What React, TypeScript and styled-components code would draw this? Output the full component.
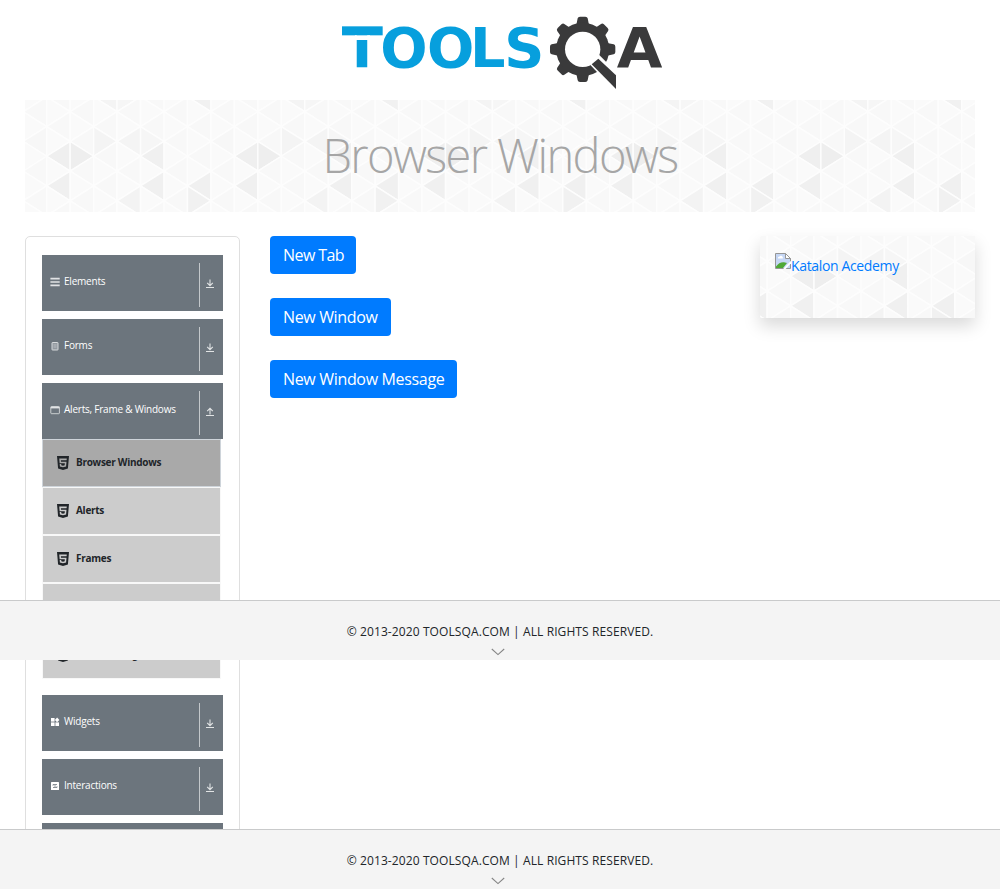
import React from "react";
import styled, { createGlobalStyle } from "styled-components";
import { IoLogoHtml5 } from "react-icons/io5";

const GlobalStyle = createGlobalStyle`
  *, *::before, *::after { box-sizing: border-box; }
  body {
    margin: 0;
    background: #fff;
    color: #212529;
    font-family: "Open Sans", "Noto Sans", sans-serif;
    font-size: 16px;
    line-height: 1.5;
  }
`;

const Page = styled.div`
  position: relative;
  height: 889px;
  overflow: hidden;
  padding: 0 25px;
`;

const Header = styled.header`
  height: 100px;
  display: flex;
  justify-content: center;
  padding: 10px 0 0 5px;
`;

const Banner = styled.div`
  height: 112px;
  display: grid;
  overflow: hidden;
  > * { grid-area: 1 / 1; }
`;

const Title = styled.h1`
  margin: 0;
  padding-bottom: 1px;
  z-index: 1;
  place-self: center;
  font-weight: 300;
  font-size: 47px;
  line-height: 1;
  letter-spacing: -1.6px;
  color: #a6a6a6;
  white-space: nowrap;
`;

const Columns = styled.div`
  display: flex;
  align-items: flex-start;
  margin-top: 24px;
`;

const Sidebar = styled.nav`
  flex: none;
  width: 215px;
  height: 700px;
  border: 1px solid #dfdfdf;
  border-radius: 5px;
  padding: 18px 16px;
  display: flex;
  flex-direction: column;
  gap: 8px;
`;

const GroupHeader = styled.div`
  height: 56px;
  background: #6c757d;
  color: #fff;
  padding: 0 8px;
  display: flex;
  align-items: center;
  justify-content: space-between;
`;

const GroupLabel = styled.span`
  display: flex;
  align-items: center;
  gap: 4px;
  margin-bottom: 4px;
  font-size: 10px;
  line-height: 14px;
  letter-spacing: -0.22px;
  white-space: nowrap;
  font-weight: 500;
  svg { position: relative; top: 1px; }
`;

const Toggle = styled.span`
  height: 44px;
  margin-top: 4px;
  border-left: 1px solid #c4c8cb;
  padding: 0 0 2px 5px;
  display: flex;
  align-items: center;
`;

const ItemList = styled.ul`
  list-style: none;
  margin: 0 2px 8px 0;
  padding: 0;
`;

const Item = styled.li<{ $active?: boolean }>`
  height: 48px;
  border: 1px solid ${(p) => (p.$active ? "#ced4da" : "#f8f8f8")};
  background: ${(p) => (p.$active ? "#a9a9a9" : "#ccc")};
  padding: 0 12px 2px;
  display: flex;
  align-items: center;
  gap: 5px;
  font-size: 10px;
  font-weight: 700;
  letter-spacing: -0.28px;
  svg { margin-top: 2px; }
`;

const Content = styled.main`
  flex: 1;
  padding-left: 30px;
  display: flex;
  flex-direction: column;
  align-items: flex-start;
  gap: 24px;
`;

const Button = styled.button<{ $width: number; $spacing: number }>`
  width: ${(p) => p.$width}px;
  height: 38px;
  padding: 0 0 0 13px;
  text-align: left;
  border: 0;
  border-radius: 4px;
  background: #007bff;
  color: #fff;
  font: 400 16px/24px "Open Sans", sans-serif;
  letter-spacing: ${(p) => p.$spacing}px;
  white-space: nowrap;
`;

const Ad = styled.aside`
  flex: none;
  width: 215px;
  height: 82px;
  display: grid;
  box-shadow: 0 8px 16px rgba(0, 0, 0, 0.15);
  > * { grid-area: 1 / 1; }
`;

const AdLink = styled.a`
  z-index: 1;
  display: flex;
  align-items: flex-start;
  padding: 17px 0 0 15px;
  color: #007bff;
  font-size: 14px;
  line-height: 26px;
  letter-spacing: -0.35px;
  white-space: nowrap;
`;

const Footer = styled.footer<{ $top: number }>`
  position: absolute;
  left: 0;
  right: 0;
  top: ${(p) => p.$top}px;
  height: 60px;
  border-top: 1px solid #c9cacb;
  background: #f4f4f4;
  display: flex;
  flex-direction: column;
  align-items: center;
  padding-top: 21px;
  font-size: 12px;
  line-height: 20px;
  letter-spacing: 0.1px;
  white-space: nowrap;
  svg { margin: 6px 4px 0 0; }
`;

const COL = 23.46;
const ROW = 14.85;
const SHADES: Record<string, string> = {
  "0,3": "#efefef", "1,3": "#eeeeee", "0,5": "#f0f0f0", "4,3": "#f0f0f0",
  "4,5": "#f0f0f0", "6,5": "#f0f0f0", "6,6": "#f1f1f1", "3,6": "#f3f3f3",
  "2,2": "#f4f4f4", "3,2": "#f4f4f4", "4,2": "#f6f6f6", "6,-1": "#f1f1f1",
  "2,-1": "#f4f4f4", "3,-1": "#f6f6f6", "7,2": "#f7f7f7",
};

/* Triangular mesh repeating every eight columns; x and y shift its origin. */
function Mesh({ width, height, x, y }: { width: number; height: number; x: number; y: number }) {
  const cells: React.ReactNode[] = [];
  const first = Math.floor(-x / COL) - 1;
  const last = Math.ceil((width - x) / COL);
  for (let c = first; c <= last; c++) {
    for (let j = -2; j <= 8; j++) {
      const left = x + c * COL;
      const right = left + COL;
      const mid = y + j * ROW;
      const pointsLeft = Math.abs(c + j) % 2 === 1;
      const apex = pointsLeft ? left : right;
      const base = pointsLeft ? right : left;
      const key = `${((c % 8) + 8) % 8},${j}`;
      cells.push(
        <polygon
          key={`${c},${j}`}
          points={`${apex},${mid} ${base},${mid - ROW} ${base},${mid + ROW}`}
          fill={SHADES[key] ?? (pointsLeft ? "#f8f8f8" : "#fafafa")}
        />
      );
    }
  }
  return (
    <svg width={width} height={height} stroke="#fdfdfd" strokeWidth="1.4" strokeLinejoin="round">
      <rect width={width} height={height} fill="#fafafa" stroke="none" />
      {cells}
    </svg>
  );
}

function Logo() {
  const teeth = [0, 45, 90, 180, 225, 270, 315];
  return (
    <svg width="335" height="85" viewBox="0 0 1005 255" role="img" aria-label="ToolsQA">
      <g fontFamily="DejaVu Sans" fontWeight="700" fontSize="167">
        <text x="24 136 276 405 508" y="171" fill="#079fdd">TOOLS</text>
        <text x="845" y="171" fill="#3a3a3b" textLength="137" lengthAdjust="spacingAndGlyphs">A</text>
      </g>
      <rect x="21" y="49" width="122" height="27" fill="#079fdd" />
      <rect x="60" y="76" width="45" height="14" fill="#fff" />
      <g fill="#3a3a3b">
        {teeth.map((a) => (
          <path
            key={a}
            d="M724 45 L728 25 Q729 20 735 20 H751 Q757 20 758 25 L762 45Z"
            transform={`rotate(${a} 743 118)`}
          />
        ))}
        <circle cx="743" cy="118" r="80" />
      </g>
      <circle cx="743" cy="118" r="53" fill="#fff" />
      <path d="M764 163 L792 134 L855 197 L855 250 L842 245Z" fill="#fff" />
      <path d="M770 163 L790 146 L843 196 V237Z" fill="#3a3a3b" />
    </svg>
  );
}

function ArrowIcon({ up }: { up?: boolean }) {
  return (
    <svg width="10" height="10" viewBox="0 0 10 10" fill="none" stroke="#e2e4e5" strokeWidth="1.1">
      <path d={up ? "M5 7.5V1.3M2.2 4.1 5 1.3l2.8 2.8M1 8.5h8" : "M5 .5v6.2M2.2 3.9 5 6.7l2.8-2.8M1 8.5h8"} />
    </svg>
  );
}

type IconName = "menu" | "form" | "window" | "widgets" | "interact";

function GroupIcon({ name }: { name: IconName }) {
  return (
    <svg width="10" height="10" viewBox="0 0 10 10" fill="none" stroke="#e1e3e5">
      {name === "menu" && <path d="M.4 1.6h9.3M.4 5h9.3M.4 8.4h9.3" strokeWidth="1.6" />}
      {name === "form" && (
        <>
          <rect x="2" y="1.5" width="6" height="7.5" rx=".5" fill="#9299a0" strokeWidth=".9" />
          <path d="M3.5 4h3M3.5 6h3" strokeWidth=".5" />
        </>
      )}
      {name === "window" && (
        <>
          <rect x=".8" y="1.5" width="8.6" height="7.2" rx=".7" strokeWidth=".8" />
          <path d="M.8 2.6h8.6" strokeWidth="1.6" />
        </>
      )}
      {name === "widgets" && (
        <g fill="#fff" stroke="none">
          <rect x="1" y="1" width="3.6" height="3.6" />
          <rect x="1" y="5.4" width="3.6" height="3.6" />
          <rect x="5.4" y="5.4" width="3.6" height="3.6" />
          <path d="M7.1.6 9.4 2.9 7.1 5.2 4.9 2.9Z" />
        </g>
      )}
      {name === "interact" && (
        <>
          <rect x="1" y="1" width="8" height="8" rx=".6" fill="#fff" stroke="none" />
          <path d="M3 4.7V3.5h4M7 5.3v1.2H3M4.1 5h1.8" stroke="#6c757d" strokeWidth=".8" />
        </>
      )}
    </svg>
  );
}

function BrokenImage() {
  return (
    <svg width="16" height="16" viewBox="0 0 16 16">
      <path d="M.5.5h10l5 5v10H.5Z" fill="#c5d6f4" stroke="#969696" />
      <path d="M10.5.5v5h5Z" fill="#fff" stroke="#969696" />
      <path d="M3 5.5a1.6 1.6 0 0 1 1.5-2 1.8 1.8 0 0 1 3.2.7 1 1 0 0 1 0 1.3Z" fill="#fff" />
      <path d="M1 15v-1.5C3.5 10 7 8.5 10 9.5l2 .5-4 5Z" fill="#4fa836" />
      <path d="M8.2 16 16 7.8v2.4L10.6 16Z" fill="#fff" />
    </svg>
  );
}

function Group({ icon, label, open }: { icon: IconName; label: string; open?: boolean }) {
  return (
    <GroupHeader>
      <GroupLabel>
        <GroupIcon name={icon} />
        {label}
      </GroupLabel>
      <Toggle>
        <ArrowIcon up={open} />
      </Toggle>
    </GroupHeader>
  );
}

function PageFooter({ top }: { top: number }) {
  return (
    <Footer $top={top}>
      © 2013-2020 TOOLSQA.COM | ALL RIGHTS RESERVED.
      <svg width="14" height="8" viewBox="0 0 14 8" fill="none" stroke="#858585" strokeWidth="1.1">
        <path d="M.8 1 7 6.6 13.2 1" />
      </svg>
    </Footer>
  );
}

const ITEMS = ["Browser Windows", "Alerts", "Frames", "Nested Frames", "Modal Dialogs"];

export default function App() {
  return (
    <Page>
      <GlobalStyle />
      <Header>
        <Logo />
      </Header>
      <Banner>
        <Mesh width={950} height={112} x={21.7} y={11.7} />
        <Title>Browser Windows</Title>
      </Banner>
      <Columns>
        <Sidebar>
          <Group icon="menu" label="Elements" />
          <Group icon="form" label="Forms" />
          <div>
            <Group icon="window" label="Alerts, Frame & Windows" open />
            <ItemList>
              {ITEMS.map((item, i) => (
                <Item key={item} $active={i === 0}>
                  <IoLogoHtml5 size={16} />
                  {item}
                </Item>
              ))}
            </ItemList>
          </div>
          <Group icon="widgets" label="Widgets" />
          <Group icon="interact" label="Interactions" />
          <Group icon="menu" label="Book Store Application" />
        </Sidebar>
        <Content>
          <Button $width={86} $spacing={-0.57}>New Tab</Button>
          <Button $width={121} $spacing={-0.35}>New Window</Button>
          <Button $width={187} $spacing={-0.33}>New Window Message</Button>
        </Content>
        <Ad>
          <Mesh width={215} height={82} x={30.6} y={-4.3} />
          <AdLink>
            <BrokenImage />
            Katalon Acedemy
          </AdLink>
        </Ad>
      </Columns>
      <PageFooter top={600} />
      <PageFooter top={829} />
    </Page>
  );
}
